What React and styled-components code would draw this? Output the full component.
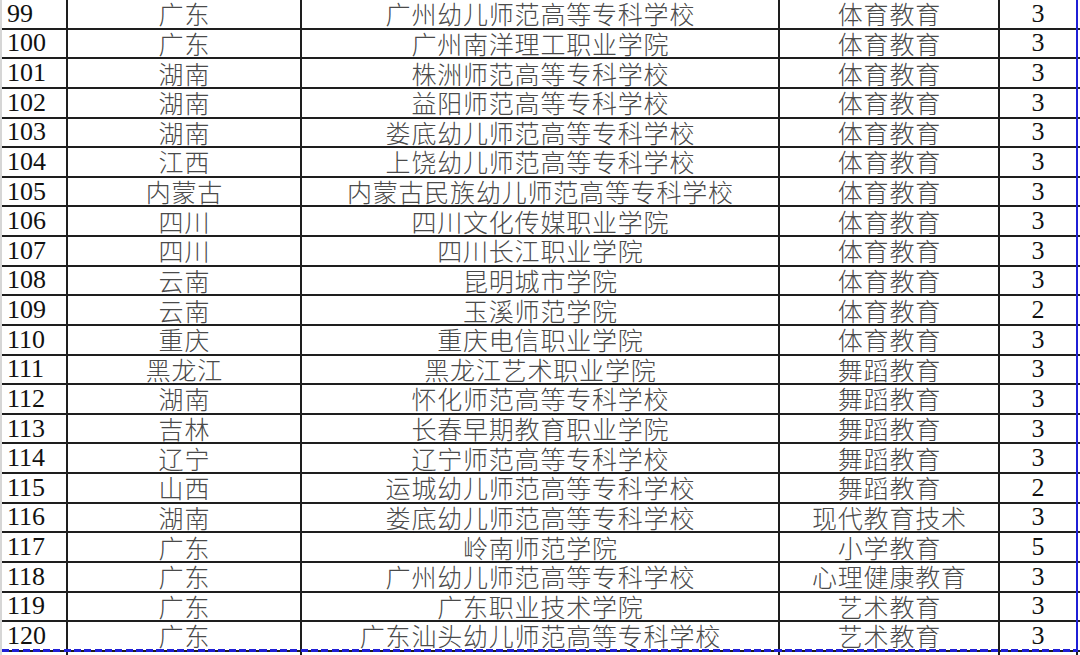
import React from "react";
import styled, { createGlobalStyle } from "styled-components";

const Global = createGlobalStyle`
  html, body {
    margin: 0;
    padding: 0;
    background: #ffffff;
    overflow: hidden;
  }
  body {
    font-family: "Liberation Serif", "Times New Roman", serif;
  }
`;

const Sheet = styled.div`
  position: relative;
  width: 1080px;
  height: 655px;
  overflow: hidden;
  border-left: 2px solid #d6d6d6;
  box-sizing: border-box;
`;

const Row = styled.div`
  display: grid;
  grid-template-columns: 66px 234px 478px 220px 78px;
  height: 29.63px;
  box-sizing: border-box;
  border-bottom: 2px solid #1e1e1e;
`;

const Cell = styled.div`
  display: flex;
  align-items: center;
  justify-content: ${(p) => (p.$align === "left" ? "flex-start" : "center")};
  padding-left: ${(p) => (p.$align === "left" ? "5px" : "0")};
  border-right: 2px solid #1e1e1e;
  box-sizing: border-box;
  white-space: nowrap;
  min-width: 0;
`;

const Num = styled.span`
  display: block;
  font-family: "Liberation Serif", "Times New Roman", serif;
  font-size: 26px;
  line-height: 26px;
  color: #111;
`;

const Han = styled.span`
  display: block;
  font-family: "Noto Sans CJK SC", sans-serif;
  font-weight: 300;
  font-size: 25px;
  letter-spacing: 0.8px;
  line-height: 25px;
  color: #4a4a4a;
  margin-right: -0.8px;
`;

const Selection = styled.div`
  position: absolute;
  left: -2px;
  top: 0;
  width: 1078px;
  height: 652px;
  box-sizing: border-box;
  border-right: 2px solid #1f1fd6;
  pointer-events: none;
`;

const DashLine = styled.div`
  position: absolute;
  left: 2px;
  right: 0;
  bottom: 0;
  height: 3px;
  background: repeating-linear-gradient(
    to right,
    #1f1fd6 0 7px,
    transparent 7px 10.3px
  );
`;

const rows = [
  [99, "广东", "广州幼儿师范高等专科学校", "体育教育", 3],
  [100, "广东", "广州南洋理工职业学院", "体育教育", 3],
  [101, "湖南", "株洲师范高等专科学校", "体育教育", 3],
  [102, "湖南", "益阳师范高等专科学校", "体育教育", 3],
  [103, "湖南", "娄底幼儿师范高等专科学校", "体育教育", 3],
  [104, "江西", "上饶幼儿师范高等专科学校", "体育教育", 3],
  [105, "内蒙古", "内蒙古民族幼儿师范高等专科学校", "体育教育", 3],
  [106, "四川", "四川文化传媒职业学院", "体育教育", 3],
  [107, "四川", "四川长江职业学院", "体育教育", 3],
  [108, "云南", "昆明城市学院", "体育教育", 3],
  [109, "云南", "玉溪师范学院", "体育教育", 2],
  [110, "重庆", "重庆电信职业学院", "体育教育", 3],
  [111, "黑龙江", "黑龙江艺术职业学院", "舞蹈教育", 3],
  [112, "湖南", "怀化师范高等专科学校", "舞蹈教育", 3],
  [113, "吉林", "长春早期教育职业学院", "舞蹈教育", 3],
  [114, "辽宁", "辽宁师范高等专科学校", "舞蹈教育", 3],
  [115, "山西", "运城幼儿师范高等专科学校", "舞蹈教育", 2],
  [116, "湖南", "娄底幼儿师范高等专科学校", "现代教育技术", 3],
  [117, "广东", "岭南师范学院", "小学教育", 5],
  [118, "广东", "广州幼儿师范高等专科学校", "心理健康教育", 3],
  [119, "广东", "广东职业技术学院", "艺术教育", 3],
  [120, "广东", "广东汕头幼儿师范高等专科学校", "艺术教育", 3],
];

export default function App() {
  return (
    <>
      <Global />
      <Sheet>
        {rows.map(([no, prov, school, major, count]) => (
          <Row key={no}>
            <Cell $align="left">
              <Num>{no}</Num>
            </Cell>
            <Cell>
              <Han>{prov}</Han>
            </Cell>
            <Cell>
              <Han>{school}</Han>
            </Cell>
            <Cell>
              <Han>{major}</Han>
            </Cell>
            <Cell>
              <Num>{count}</Num>
            </Cell>
          </Row>
        ))}
        <Row>
          <Cell $align="left" />
          <Cell />
          <Cell />
          <Cell />
          <Cell />
        </Row>
        <Selection>
          <DashLine />
        </Selection>
      </Sheet>
    </>
  );
}
